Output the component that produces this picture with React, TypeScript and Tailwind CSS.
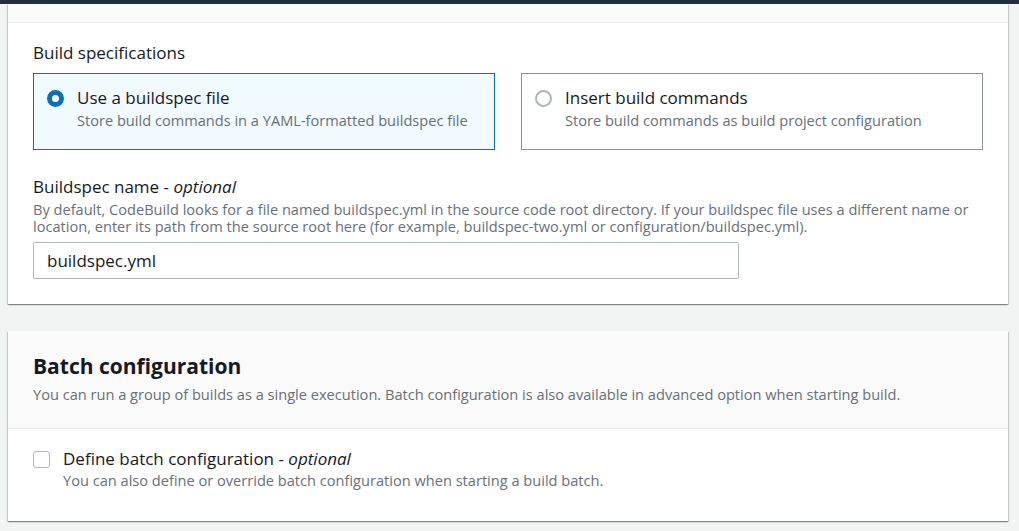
export default function App() {
  return (
    <div
      className="min-h-[531px] w-full bg-[#f2f3f3] text-[#16191f]"
      style={{ fontFamily: '"Open Sans", "Noto Sans", Arial, sans-serif' }}
    >
      {/* console top bar */}
      <div className="h-[4px] bg-[#232f3e]" />

      <div className="ml-[8px] mr-[11px] flex flex-col gap-[27px]">
        {/* Build specifications card */}
        <div className="bg-white shadow-[0_1px_1px_0_rgba(0,28,36,0.3),1px_1px_1px_0_rgba(0,28,36,0.15),-1px_1px_1px_0_rgba(0,28,36,0.15)]">
          <div className="h-[19px] border-b border-[#eaeded] bg-[#fafafa]" />
          <div className="px-[25px] pt-[19px] pb-[25px]">
            <div className="text-[17px] leading-[22px]">Build specifications</div>

            <div className="mt-[9px] grid grid-cols-2 gap-[26px]">
              <label className="flex items-start gap-[13px] border border-[#0073bb] bg-[#f1faff] pl-[13px] pt-[13px] pb-[18px]">
                <span className="mt-[3px] h-[17px] w-[17px] shrink-0 rounded-full border-[5px] border-[#0073bb] bg-white" />
                <span className="flex flex-col">
                  <span className="text-[17px] leading-[22px]">Use a buildspec file</span>
                  <span className="text-[14.6px] leading-[22px] text-[#687078]">
                    Store build commands in a YAML-formatted buildspec file
                  </span>
                </span>
              </label>
              <label className="flex items-start gap-[13px] border border-[#879596] bg-white pl-[13px] pt-[13px] pb-[18px]">
                <span className="mt-[3px] h-[17px] w-[17px] shrink-0 rounded-full border-2 border-[#aab7b8] bg-white" />
                <span className="flex flex-col">
                  <span className="text-[17px] leading-[22px]">Insert build commands</span>
                  <span className="text-[14.6px] leading-[22px] text-[#687078]">
                    Store build commands as build project configuration
                  </span>
                </span>
              </label>
            </div>

            <div className="mt-[26px] text-[17px] leading-[22px]">
              Buildspec name - <i>optional</i>
            </div>
            <p className="mt-[3px] text-[14.6px] leading-[17px] text-[#687078]">
              By default, CodeBuild looks for a file named buildspec.yml in the source code root directory. If your
              buildspec file uses a different name or location, enter its path from the source root here (for example,
              buildspec-two.yml or configuration/buildspec.yml).
            </p>
            <div className="mt-[7px] flex h-[37px] w-[706px] items-center rounded-[2px] border border-[#aab7b8] bg-white px-[13px] text-[17px]">
              buildspec.yml
            </div>
          </div>
        </div>

        {/* Batch configuration card */}
        <div className="bg-white shadow-[0_1px_1px_0_rgba(0,28,36,0.3),1px_1px_1px_0_rgba(0,28,36,0.15),-1px_1px_1px_0_rgba(0,28,36,0.15)]">
          <div className="border-b border-[#eaeded] bg-[#fafafa] px-[25px] pt-[22px] pb-[24px]">
            <h2 className="text-[21px] font-bold leading-[26px]">Batch configuration</h2>
            <p className="mt-[5px] text-[14.6px] leading-[20px] text-[#687078]">
              You can run a group of builds as a single execution. Batch configuration is also available in advanced
              option when starting build.
            </p>
          </div>
          <div className="flex items-start gap-[13px] px-[25px] pt-[19px] pb-[31px]">
            <span className="mt-[3px] h-[17px] w-[17px] shrink-0 rounded-[3px] border border-[#aab7b8] bg-white" />
            <div className="flex flex-col">
              <span className="text-[17px] leading-[22px]">
                Define batch configuration - <i>optional</i>
              </span>
              <span className="text-[14.6px] leading-[20px] text-[#687078]">
                You can also define or override batch configuration when starting a build batch.
              </span>
            </div>
          </div>
        </div>
      </div>
    </div>
  );
}
